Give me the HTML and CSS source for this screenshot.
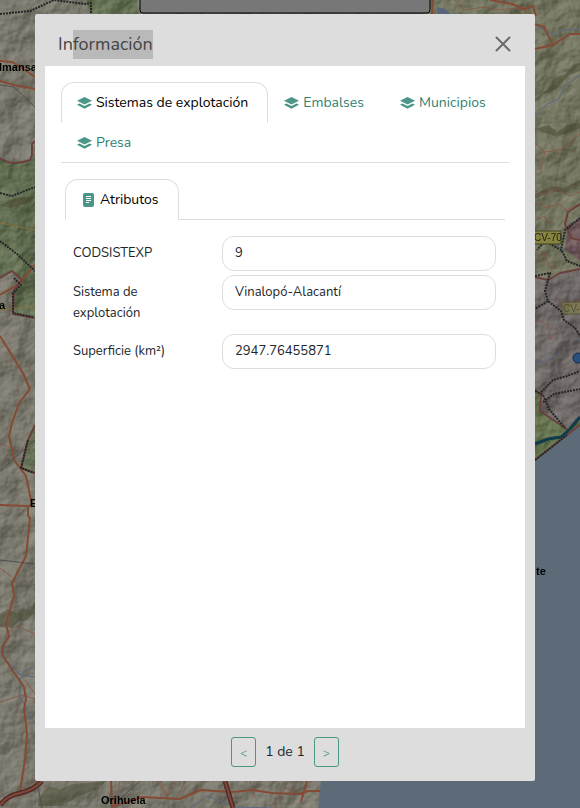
FILE: index.html
```html
<!DOCTYPE html>
<html lang="es">
<head>
  <meta charset="UTF-8"/>
  <meta name="viewport" content="width=device-width, initial-scale=1"/>
  <title>Información</title>
  <link rel="stylesheet" href="styles.css">
</head>
<body>
<svg class="map" viewBox="0 0 580 808" preserveAspectRatio="xMidYMin slice" aria-hidden="true">
  <defs>
    <filter id="relief" x="0" y="0" width="100%" height="100%" color-interpolation-filters="sRGB">
      <feTurbulence type="fractalNoise" baseFrequency="0.035" numOctaves="4" seed="8"/>
      <feDiffuseLighting surfaceScale="6" lighting-color="#fff"><feDistantLight azimuth="225" elevation="30"/></feDiffuseLighting>
    </filter>
  </defs>
  <rect width="580" height="808" fill="#7a786c"/>
  <rect x="430" width="150" height="290" fill="#73745f"/>
  <path fill="#626e51" d="M0 159l12 5 18-4 5-19v177l-22-4 1-24 8-10-10-9-12 7z"/>
  <path fill="#626e51" d="M35 425l-7 15-7 28 14 5zM85 0h52v14H91z"/>
  <path fill="#6d6866" d="M535 277l13 3 12-7 20-4v170h-45z"/>
  <path fill="#65734f" d="M535 391l6 4 1 17 25 18 13-9v14l-45 30z"/>
  <path fill="#6b5558" d="M580 218l-12 7-3 25 15 10z"/>
  <rect class="relief" width="580" height="808" filter="url(#relief)"/>
  <path fill="#5d6b79" d="M580 427l-14 8-31 26-80 120-134 200-3 27h262z"/>
  <path fill="#566579" d="M437 7l8 2 7 6-14-1z"/>

  <!-- ridges -->
  <g class="ridge">
    <path d="M535 99l12-9 7-12 12-4 7-9 7-2v8l-12 5-10 12-14 6-9 8z"/>
    <path d="M535 129l13-4 9 7 10-7 13-2v5l-15 6-9 3z"/>
    <path d="M535 194l16-8 13 2 16-8v6l-15 7-14-2-16 8z"/>
    <path d="M0 614l8-5 8 4 7-4 7 1 5-7v8l-8 9-9 1-6 7-12-1z"/>
    <path d="M38 799l10-13 12 3 12-5 14-1 21-2-10 8-17 7-20 10H38z"/>
    <path d="M512 8l12 7 8-2-6 9zM0 205l17-7 18-2-9 7-15 5z"/>
  </g>

  <g class="minor">
    <path d="M455 0l9 10 20-3 13 3 20-2 15 6M0 444l9 3M0 568l12 9M6 633l11-7 18 8M0 702l22-7 13 4M25 680l10 14M26 786l9-5"/>
    <path d="M535 191l7 3 14-5 14 7 10-4M535 143l10 9 18-3 17-15M545 152l-5 18M535 202l12 6 12-4 7 6 14-6M535 221l9-5 6 9M535 260l9-7 5 13 9 3M580 300l-12 7-10-8M535 318l13 7 3 15"/>
    <path d="M120 781l-5 27M160 781l8 16M158 781l8 16 7-16M185 781l-9 19M250 781l5 17M270 808l15-20 20 6"/>
  </g>
  <g class="river">
    <path d="M535 25l18 10 9-5 18-1M580 76l-15 9-6 14-12 5-12 12M565 236l-9 9 10 7M560 353l-14 8-11 2M580 340l-12-6M0 653l20 22 15 2M20 675l15-10M20 678v18l15 29"/>
    <path d="M190 808l17-12 28 11 38 1M115 790l9 18"/>
  </g>
  <g class="road">
    <path d="M0 61l12 1 10 6 13 9M0 81l14 4 21 4M0 336l23 37 7 16-11 14-7 20-3 13 5 24 12 16 5 24 1 4-4 3v9l2 2-4 38-14 27 2 13-8 28 3 13-7 10 1 9 10 15 11 16 2 12-2 10 3 25-2 26-5 31M0 505l28 1M0 295l19-11 16-19"/>
    <path d="M433 0l-1 14M490 0l22 4 12 5 9-3 3 10M535 24l9 3 9 18-18 4M553 45l17-11h10M111 781l1 26 30-10 38 2 20-9 32 2 20-2 20 3 28 1 8-3h12M307 781l-6 21"/>
  </g>
  <path class="highway" d="M0 805q8-10 20-12 14-3 22-12M225 781l8 27"/>
  <path class="highway-in" d="M0 805q8-10 20-12 14-3 22-12M225 781l8 27"/>
  <path class="track" d="M0 223l35 7M0 310l35-4"/>
  <path class="rail" d="M0 85l14 2 21 20M0 471l35-31M0 560l35 4M37 781l5 27M140 781l-20 18"/>
  <path class="limit" d="M0 158q12 9 30 2l2-5v-11l3-3M0 278l12-7 10 9-8 10-1 24 22 4M35 425l-7 15-7 28 14 5M535 277l13 3 12-7 20-4M580 204l-12 8-3 12 6 14 9 2M535 390l6 4-1 17 28 19M535 460l33-26 12-9"/>
  <path class="dotted" d="M0 14l30-3 24-11 31 4 6-1v11M0 193l12 3 23-9M0 241l17 13 18 17M14 278l7 7-8 8v20l20 4M28 440l-7 28 13 5"/>
  <path class="dotted" d="M580 218l-15 12-4 20-16-9-8 9M562 251l5 10 13 5M535 276l15-3-5 18 3 10 13 10 3 9 11 8 5 8M548 301l-13 8M535 391l8 4 6 14 16 19M541 392l12-12 14-4 13-5M543 402l11-8 26-5M535 460l32-25"/>
  <path class="coast" d="M535 444l13-5 13-2 9-8 10-12"/>

  <rect class="shield" x="532" y="231" width="29" height="13" rx="2"/>
  <text class="shield-text" x="534" y="241">CV-70</text>
  <rect class="shield faded" x="562" y="302" width="36" height="12" rx="2"/>
  <text class="shield-text faded" x="563" y="312">CV-</text>
  <circle cx="578" cy="358" r="5" fill="#29507f" stroke="#172c49"/>
  <text class="town" x="-1" y="71">lmansa</text>
  <text class="town" x="-1" y="309">a</text>
  <text class="town" x="30" y="507">El</text>
  <text class="town" x="536" y="575">te</text>
  <text class="town" x="101" y="804">Orihuela</text>
  <rect x="140" y="-20" width="290" height="33" rx="3" fill="#777" stroke="#000" stroke-width="1"/>
</svg>

<svg class="sprite" aria-hidden="true">
  <symbol id="layers" viewBox="0 0 15 14">
    <path d="M7.500 1L0 4.700l7.500 3.700L15 4.700z"/>
    <path d="M0 8.700l2.500-1.200 5 2.400 5-2.400L15 8.700l-7.500 4z"/>
  </symbol>
  <symbol id="sheet" viewBox="0 0 15 14">
    <rect x="2" width="11" height="14" rx="2"/>
    <path fill="none" stroke="#fff" d="M5 3.500h5M5 5.500h5M5 7.500h5M5 9.500h3"/>
  </symbol>
</svg>

<main class="overlay">
  <section class="modal" role="dialog" aria-labelledby="modalTitle">
    <header class="modal-header">
      <h1 class="modal-title" id="modalTitle">In<span class="selected">formación</span></h1>
      <button class="close" type="button" aria-label="Cerrar">
        <svg viewBox="0 0 16 16"><path d="M1.500 1.500l13 13M14.500 1.500l-13 13"/></svg>
      </button>
    </header>
    <div class="modal-body">
      <nav class="tabs">
        <a class="tab active" href="#sistemas"><svg><use href="#layers"/></svg>Sistemas de explotación</a>
        <a class="tab" href="#embalses"><svg><use href="#layers"/></svg>Embalses</a>
        <a class="tab" href="#municipios"><svg><use href="#layers"/></svg>Municipios</a>
        <a class="tab" href="#presa"><svg><use href="#layers"/></svg>Presa</a>
      </nav>
      <div class="panel" id="sistemas">
        <nav class="tabs">
          <a class="tab active" href="#atributos"><svg><use href="#sheet"/></svg>Atributos</a>
        </nav>
        <form class="fields" id="atributos">
          <div class="field">
            <label for="codsistexp">CODSISTEXP</label>
            <input id="codsistexp" value="9" readonly>
          </div>
          <div class="field">
            <label for="sistema">Sistema de explotación</label>
            <input id="sistema" value="Vinalopó-Alacantí" readonly>
          </div>
          <div class="field">
            <label for="superficie">Superficie (km²)</label>
            <input id="superficie" value="2947.76455871" readonly>
          </div>
        </form>
      </div>
    </div>
    <footer class="modal-footer">
      <button class="pager" type="button" aria-label="Anterior">&lt;</button>
      <span>1 de 1</span>
      <button class="pager" type="button" aria-label="Siguiente">&gt;</button>
    </footer>
  </section>
</main>
</body>
</html>
```
FILE: styles.css
```css
* { box-sizing: border-box; }
body {
  margin: 0;
  background: #7a786c;
  color: #212529;
  font-family: Nunito, Lato, "Noto Sans", sans-serif;
  font-size: 14px;
  line-height: 23px;
}

/* map */
.map {
  position: fixed;
  top: 0;
  left: 0;
  width: 100%;
  height: 100%;
}
.map path { stroke-linejoin: round; }
.sprite { display: none; }
.relief { mix-blend-mode: soft-light; opacity: 0.45; }
.ridge { fill: #4b4934; opacity: 0.5; }
.minor { fill: none; stroke: #89513f; opacity: 0.75; }
.river { fill: none; stroke: #5b6881; }
.road { fill: none; stroke: #854a34; stroke-width: 2; }
.highway { fill: none; stroke: #512b25; stroke-width: 5; }
.highway-in { fill: none; stroke: #80483d; stroke-width: 2; }
.track { fill: none; stroke: #87713c; }
.rail { fill: none; stroke: #4f4f4f; }
.limit { fill: none; stroke: #6b3f3d; stroke-width: 2; }
.dotted { fill: none; stroke: #252525; stroke-width: 2; stroke-dasharray: 2 1; }
.coast { fill: none; stroke: #103b4b; stroke-width: 3; }
.shield { fill: #86833f; stroke: #444425; }
.shield-text { font: 10px "Liberation Sans", sans-serif; fill: #22221a; }
.faded { opacity: 0.5; }
.town { font: bold 11px "Liberation Sans", sans-serif; fill: #000; }

/* modal */
.overlay {
  position: relative;
  display: flex;
  justify-content: center;
  min-height: 100vh;
  padding: 14px 45px 27px 35px;
}
.modal {
  display: flex;
  flex-direction: column;
  width: 100%;
  max-width: 500px;
  padding: 10px;
  background: #ddd;
  border-radius: 2px;
}
.modal-header {
  display: flex;
  align-items: center;
  justify-content: space-between;
  height: 42px;
  padding: 0 13px 2px;
}
.modal-title {
  margin: 0;
  color: #444;
  font-size: 18px;
  font-weight: 400;
  line-height: 29px;
}
.selected {
  display: inline-block;
  background: #b9b9b9;
}
.close {
  display: flex;
  padding: 1px;
  border: 0;
  background: none;
}
.close svg {
  width: 16px;
  height: 16px;
  fill: none;
  stroke: #6b6b6b;
  stroke-width: 2;
  stroke-linecap: round;
}
.modal-body {
  flex: 1;
  padding: 16px;
  background: #fff;
}

.tabs {
  display: flex;
  flex-wrap: wrap;
  border-bottom: 1px solid #dcdde4;
}
.tab {
  display: flex;
  align-items: center;
  margin-bottom: -1px;
  padding: 8px 19px 8px 15px;
  border: 1px solid transparent;
  border-radius: 13px 13px 0 0;
  color: #2f8072;
  text-decoration: none;
}
.tab.active {
  border-color: #dcdde4 #dcdde4 #fff;
  background: #fff;
  color: #000;
}
.tab svg {
  width: 15px;
  height: 14px;
  margin-right: 4px;
  fill: #4c9688;
}

.panel { padding: 16px 4px; }
.fields { padding: 16px 9px 0 8px; }
.field {
  display: grid;
  grid-template-columns: 149px 1fr;
  align-items: start;
  margin-bottom: 4px;
  font-size: 13px;
  line-height: 21px;
}
.field label { padding: 7px 24px 6px 0; }
.field input {
  width: 100%;
  height: 35px;
  padding: 0 12px 1px;
  border: 1px solid #dcdde4;
  border-radius: 12px;
  background: #fff;
  color: #212529;
  font: inherit;
}

.modal-footer {
  display: flex;
  justify-content: center;
  gap: 9px;
  padding: 9px 0 4px;
  line-height: 30px;
}
.pager {
  width: 25px;
  height: 30px;
  padding: 0;
  border: 1px solid #4c9688;
  border-radius: 3px;
  background: none;
  color: #4c9688;
  font: inherit;
  font-size: 12px;
}
```
